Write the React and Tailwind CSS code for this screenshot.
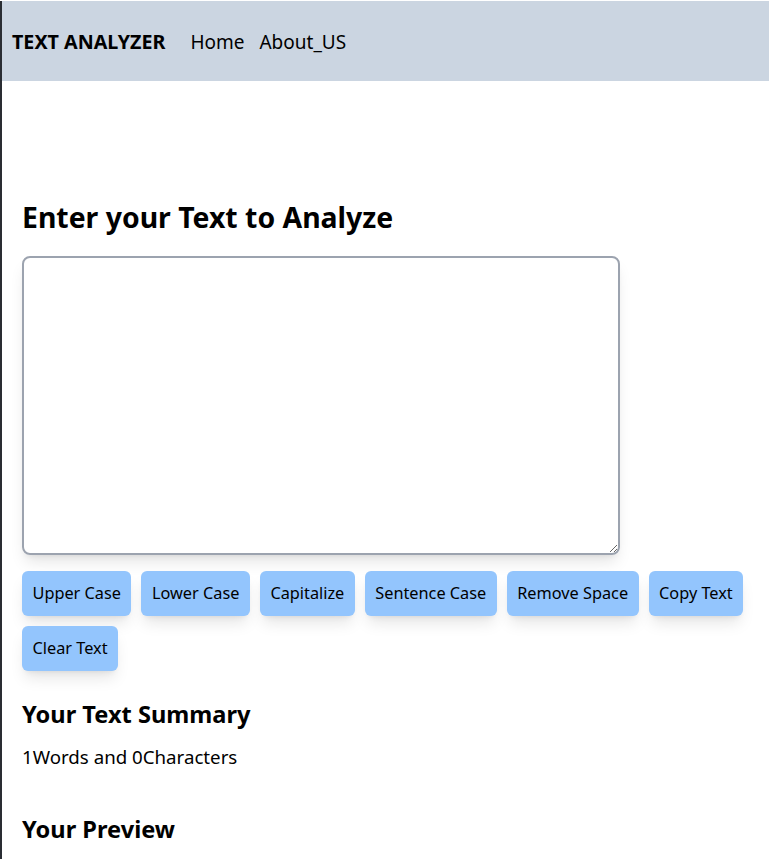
import { useState } from "react"

const buttons = ["Upper Case", "Lower Case", "Capitalize", "Sentence Case", "Remove Space", "Copy Text", "Clear Text"]

export default function App() {
    const [text, setText] = useState("")

    return (
        <div className="min-h-screen bg-white border-l-2 border-[#2a2d33] text-black" style={{ fontFamily: '"Noto Sans", "Open Sans", sans-serif' }}>
            <nav className="h-[80px] mt-px pt-[2px] bg-[#cbd5e1] flex items-center px-[10px] gap-[25px]">
                <div className="font-bold text-[19.7px]">TEXT ANALYZER</div>
                <ul className="flex gap-[15px] text-[19px]">
                    <li>Home</li>
                    <li>About_US</li>
                </ul>
            </nav>

            <div className="px-[20px] pt-[118px]">
                <h1 className="text-[28.4px] font-bold leading-[36px]">Enter your Text to Analyze</h1>
                <textarea
                    className="mt-[21px] block w-[598px] h-[299px] border-2 border-[#9ca3af] rounded-lg shadow-lg outline-none p-2"
                    value={text}
                    onChange={(e) => setText(e.target.value)}
                />
                <div className="mt-[16px] flex flex-wrap gap-x-[10px] gap-y-[10px] w-[740px]">
                    {buttons.map((b) => (
                        <button key={b} className="h-[45px] px-[10.5px] bg-[#93c5fd] rounded-md shadow-lg text-[16.3px]">
                            {b}
                        </button>
                    ))}
                </div>
                <h2 className="mt-[27px] text-[23.6px] font-bold leading-[32px]">Your Text Summary</h2>
                <p className="mt-[13px] text-[18.7px] leading-[28px]">1Words and 0Characters</p>
                <h2 className="mt-[42px] text-[23.6px] font-bold leading-[32px]">Your Preview</h2>
            </div>
        </div>
    )
}
